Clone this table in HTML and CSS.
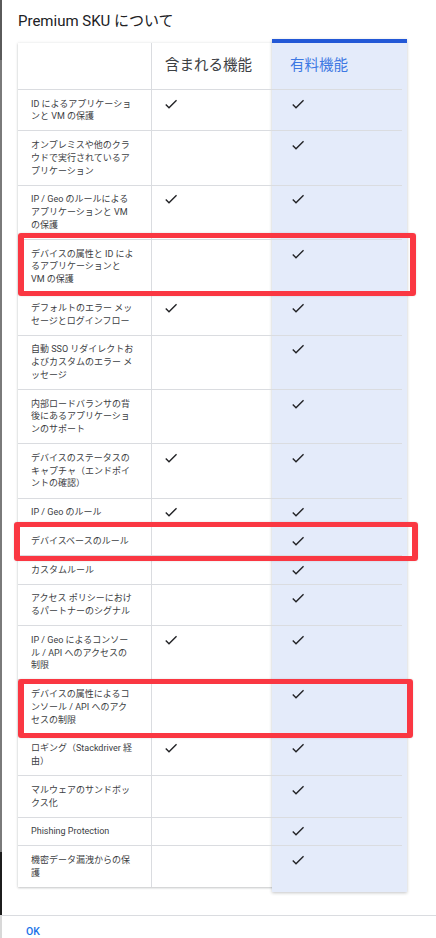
FILE: index.html
```html
<!DOCTYPE html>
<html lang="ja">
<head>
<meta charset="utf-8">
<title>Premium SKU について</title>
<link rel="stylesheet" href="styles.css">
</head>
<body>
<div class="screen">
  <div class="backdrop"></div>
  <div class="dialog">
    <h2 class="title">Premium SKU について</h2>
    <div class="compare">
      <div class="highlight"></div>
      <div class="row head">
        <div class="cell name"></div>
        <div class="cell inc">含まれる機能</div>
        <div class="cell prem">有料機能</div>
      </div>

      <div class="row"><div class="cell name">ID によるアプリケーショ<br>ンと VM の保護</div><div class="cell inc"><svg class="ck" viewBox="0 0 24 24"><path d="M9 16.17L4.83 12l-1.42 1.41L9 19 21 7l-1.41-1.41z"/></svg></div><div class="cell prem"><svg class="ck" viewBox="0 0 24 24"><path d="M9 16.17L4.83 12l-1.42 1.41L9 19 21 7l-1.41-1.41z"/></svg></div></div>

      <div class="row"><div class="cell name">オンプレミスや他のクラ<br>ウドで実行されているア<br>プリケーション</div><div class="cell inc"></div><div class="cell prem"><svg class="ck" viewBox="0 0 24 24"><path d="M9 16.17L4.83 12l-1.42 1.41L9 19 21 7l-1.41-1.41z"/></svg></div></div>

      <div class="row"><div class="cell name">IP / Geo のルールによる<br>アプリケーションと VM<br>の保護</div><div class="cell inc"><svg class="ck" viewBox="0 0 24 24"><path d="M9 16.17L4.83 12l-1.42 1.41L9 19 21 7l-1.41-1.41z"/></svg></div><div class="cell prem"><svg class="ck" viewBox="0 0 24 24"><path d="M9 16.17L4.83 12l-1.42 1.41L9 19 21 7l-1.41-1.41z"/></svg></div></div>

      <div class="row"><div class="cell name">デバイスの属性と ID によ<br>るアプリケーションと<br>VM の保護</div><div class="cell inc"></div><div class="cell prem"><svg class="ck" viewBox="0 0 24 24"><path d="M9 16.17L4.83 12l-1.42 1.41L9 19 21 7l-1.41-1.41z"/></svg></div></div>

      <div class="row"><div class="cell name">デフォルトのエラー メッ<br>セージとログインフロー</div><div class="cell inc"><svg class="ck" viewBox="0 0 24 24"><path d="M9 16.17L4.83 12l-1.42 1.41L9 19 21 7l-1.41-1.41z"/></svg></div><div class="cell prem"><svg class="ck" viewBox="0 0 24 24"><path d="M9 16.17L4.83 12l-1.42 1.41L9 19 21 7l-1.41-1.41z"/></svg></div></div>

      <div class="row"><div class="cell name">自動 SSO リダイレクトお<br>よびカスタムのエラー メ<br>ッセージ</div><div class="cell inc"></div><div class="cell prem"><svg class="ck" viewBox="0 0 24 24"><path d="M9 16.17L4.83 12l-1.42 1.41L9 19 21 7l-1.41-1.41z"/></svg></div></div>

      <div class="row"><div class="cell name">内部ロードバランサの背<br>後にあるアプリケーショ<br>ンのサポート</div><div class="cell inc"></div><div class="cell prem"><svg class="ck" viewBox="0 0 24 24"><path d="M9 16.17L4.83 12l-1.42 1.41L9 19 21 7l-1.41-1.41z"/></svg></div></div>

      <div class="row"><div class="cell name">デバイスのステータスの<br>キャプチャ（エンドポイ<br>ントの確認）</div><div class="cell inc"><svg class="ck" viewBox="0 0 24 24"><path d="M9 16.17L4.83 12l-1.42 1.41L9 19 21 7l-1.41-1.41z"/></svg></div><div class="cell prem"><svg class="ck" viewBox="0 0 24 24"><path d="M9 16.17L4.83 12l-1.42 1.41L9 19 21 7l-1.41-1.41z"/></svg></div></div>

      <div class="row"><div class="cell name">IP / Geo のルール</div><div class="cell inc"><svg class="ck" viewBox="0 0 24 24"><path d="M9 16.17L4.83 12l-1.42 1.41L9 19 21 7l-1.41-1.41z"/></svg></div><div class="cell prem"><svg class="ck" viewBox="0 0 24 24"><path d="M9 16.17L4.83 12l-1.42 1.41L9 19 21 7l-1.41-1.41z"/></svg></div></div>

      <div class="row"><div class="cell name">デバイスベースのルール</div><div class="cell inc"></div><div class="cell prem"><svg class="ck" viewBox="0 0 24 24"><path d="M9 16.17L4.83 12l-1.42 1.41L9 19 21 7l-1.41-1.41z"/></svg></div></div>

      <div class="row"><div class="cell name">カスタムルール</div><div class="cell inc"></div><div class="cell prem"><svg class="ck" viewBox="0 0 24 24"><path d="M9 16.17L4.83 12l-1.42 1.41L9 19 21 7l-1.41-1.41z"/></svg></div></div>

      <div class="row"><div class="cell name">アクセス ポリシーにおけ<br>るパートナーのシグナル</div><div class="cell inc"></div><div class="cell prem"><svg class="ck" viewBox="0 0 24 24"><path d="M9 16.17L4.83 12l-1.42 1.41L9 19 21 7l-1.41-1.41z"/></svg></div></div>

      <div class="row"><div class="cell name">IP / Geo によるコンソー<br>ル / API へのアクセスの<br>制限</div><div class="cell inc"><svg class="ck" viewBox="0 0 24 24"><path d="M9 16.17L4.83 12l-1.42 1.41L9 19 21 7l-1.41-1.41z"/></svg></div><div class="cell prem"><svg class="ck" viewBox="0 0 24 24"><path d="M9 16.17L4.83 12l-1.42 1.41L9 19 21 7l-1.41-1.41z"/></svg></div></div>

      <div class="row"><div class="cell name">デバイスの属性によるコ<br>ンソール / API へのアク<br>セスの制限</div><div class="cell inc"></div><div class="cell prem"><svg class="ck" viewBox="0 0 24 24"><path d="M9 16.17L4.83 12l-1.42 1.41L9 19 21 7l-1.41-1.41z"/></svg></div></div>

      <div class="row"><div class="cell name">ロギング（Stackdriver 経<br>由）</div><div class="cell inc"><svg class="ck" viewBox="0 0 24 24"><path d="M9 16.17L4.83 12l-1.42 1.41L9 19 21 7l-1.41-1.41z"/></svg></div><div class="cell prem"><svg class="ck" viewBox="0 0 24 24"><path d="M9 16.17L4.83 12l-1.42 1.41L9 19 21 7l-1.41-1.41z"/></svg></div></div>

      <div class="row"><div class="cell name">マルウェアのサンドボッ<br>クス化</div><div class="cell inc"></div><div class="cell prem"><svg class="ck" viewBox="0 0 24 24"><path d="M9 16.17L4.83 12l-1.42 1.41L9 19 21 7l-1.41-1.41z"/></svg></div></div>

      <div class="row"><div class="cell name">Phishing Protection</div><div class="cell inc"></div><div class="cell prem"><svg class="ck" viewBox="0 0 24 24"><path d="M9 16.17L4.83 12l-1.42 1.41L9 19 21 7l-1.41-1.41z"/></svg></div></div>

      <div class="row last"><div class="cell name">機密データ漏洩からの保<br>護</div><div class="cell inc"></div><div class="cell prem"><svg class="ck" viewBox="0 0 24 24"><path d="M9 16.17L4.83 12l-1.42 1.41L9 19 21 7l-1.41-1.41z"/></svg></div></div>

      <div class="mark mark-1"></div>
      <div class="mark mark-2"></div>
      <div class="mark mark-3"></div>
    </div>
    <div class="actions"><button class="ok" type="button">OK</button></div>
  </div>
</div>
</body>
</html>
```

FILE: styles.css
```css
* { box-sizing: border-box; }

html, body {
  margin: 0;
  padding: 0;
  background: #ffffff;
}

body {
  font-family: Roboto, "Noto Sans CJK JP", sans-serif;
  color: #3c4043;
}

.screen {
  display: flex;
  width: 436px;
  height: 938px;
  overflow: hidden;
}

.backdrop {
  flex: 0 0 2px;
  background: linear-gradient(to bottom,
    #5a5a5a 0, #5a5a5a 60px,
    #7a7a7a 60px, #7a7a7a 852px,
    #1c1c1c 852px, #1c1c1c 915px,
    #d8d8d8 915px);
}

.dialog {
  flex: 1;
  background: #ffffff;
  display: flex;
  flex-direction: column;
}

.title {
  margin: 0;
  padding: 11px 0 0 16px;
  font-size: 15px;
  line-height: 20px;
  font-weight: 400;
  color: #202124;
}

.compare {
  position: relative;
  margin: 12px 0 0 16px;
  width: 384px;
  background: #ffffff;
  box-shadow: 0 1px 2px rgba(60, 64, 67, 0.25), 0 0 3px rgba(60, 64, 67, 0.12);
}

.highlight {
  position: absolute;
  left: 254px;
  top: -4px;
  bottom: -5px;
  width: 135px;
  background: #e4ebfa;
  border-top: 4px solid #2358d6;
  box-shadow: 0 1px 3px rgba(60, 64, 67, 0.3);
}

.row {
  position: relative;
  z-index: 1;
  display: grid;
  grid-template-columns: 134px 120px 130px;
  border-bottom: 1px solid #dadce0;
}

.row.last { border-bottom: none; }

.cell {
  font-size: 9px;
  line-height: 12.8px;
  white-space: nowrap;
}

.cell.name {
  border-right: 1px solid #dadce0;
  padding: 7.5px 0 7.4px 13px;
  color: #3c4043;
}

.cell.inc { padding: 5.6px 0 0 11px; }
.cell.prem { padding: 5.6px 0 0 18px; }

.head { height: 47px; }

.head .cell {
  display: flex;
  align-items: center;
  padding-top: 0;
  padding-bottom: 0;
  font-size: 14.5px;
  line-height: 20px;
}

.head .cell.inc { padding-left: 13px; color: #3c4043; }
.head .cell.prem { padding-left: 18px; color: #3d78e3; }

.ck {
  display: block;
  width: 16px;
  height: 16px;
  fill: #202124;
}

.mark {
  position: absolute;
  z-index: 2;
  border: 5.5px solid #fa3742;
  border-left-width: 6.5px;
  border-right-width: 6.5px;
  border-radius: 3px;
  box-shadow: 0 0 2px rgba(0, 0, 0, 0.15);
}

.mark-1 { left: 0; top: 190px; width: 398px; height: 63px; }
.mark-2 { left: -4px; top: 479px; width: 404px; height: 39px; }
.mark-3 { left: 0; top: 636px; width: 395px; height: 59px; }

.actions {
  margin-top: 28px;
  border-top: 1px solid #dadce0;
  padding: 10px 0 0 24px;
  font-size: 10.5px;
  line-height: 12px;
}

.ok {
  display: block;
  border: none;
  background: none;
  padding: 0;
  font-family: Roboto, "Noto Sans CJK JP", sans-serif;
  font-size: 10.5px;
  line-height: 12px;
  font-weight: 500;
  color: #1a73e8;
}
```
